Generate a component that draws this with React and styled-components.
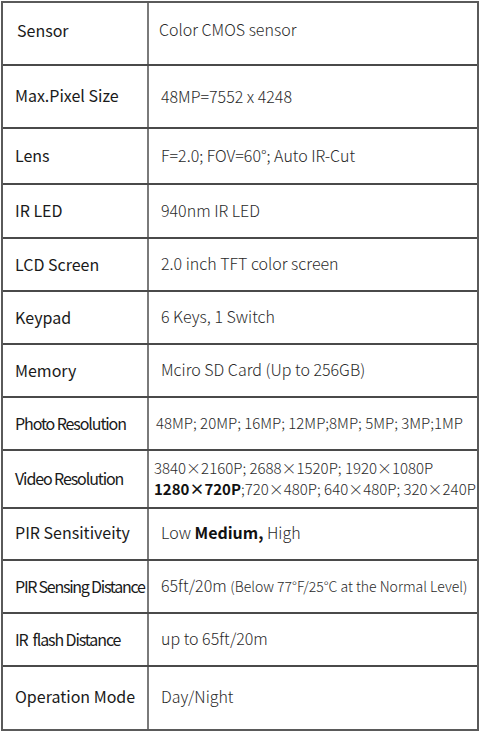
import React from 'react';
import styled, { createGlobalStyle } from 'styled-components';

const GlobalStyle = createGlobalStyle`
    html, body {
        margin: 0;
        padding: 0;
        background: #ffffff;
    }
    body {
        font-family: "Noto Sans CJK SC", "Noto Sans", sans-serif;
        color: #222;
    }
`

const Table = styled.div`
    margin: 1px 0 0 1px;
    width: 478px;
    box-sizing: border-box;
    border: 2px solid #5a5a5a;
`

const Row = styled.div`
    display: grid;
    grid-template-columns: 146px 1fr;
    height: ${p => p.h}px;
    box-sizing: border-box;
    padding-bottom: ${p => p.lift ?? 2}px;
    border-top: ${p => p.first ? 'none' : '2px solid #4a4a4a'};
`

const Label = styled.div`
    display: flex;
    align-items: center;
    padding-left: ${p => p.indent || 12}px;
    margin-bottom: -${p => p.lift ?? 2}px;
    padding-bottom: ${p => p.lift ?? 2}px;
    border-right: 2px solid #7a7a7a;
    font-size: 16px;
    font-weight: 400;
    color: #1a1a1a;
    letter-spacing: ${p => p.tight ? `${p.tight}px` : '0'};
    white-space: pre;
`

const Value = styled.div`
    display: flex;
    flex-direction: column;
    justify-content: center;
    padding-left: ${p => p.indent || 12}px;
    padding-top: ${p => p.shift || 0}px;
    font-size: ${p => p.size || 16}px;
    font-weight: 300;
    color: #2a2a2a;
    white-space: nowrap;
    line-height: 1.4;
`

const Strong = styled.b`
    font-weight: 700;
    color: #111;
`

const Note = styled.span`
    font-size: 14px;
`

const rows = [
    { label: 'Sensor', value: 'Color CMOS sensor', h: 61, li: 14, vi: 10, lift: 8 },
    { label: 'Max.Pixel Size', value: '48MP=7552 x 4248', h: 63, vi: 12, shift: 4, lift: 4 },
    { label: 'Lens', value: 'F=2.0; FOV=60°; Auto IR-Cut', h: 56 },
    { label: 'IR LED', value: '940nm IR LED', h: 54, vi: 12 },
    { label: 'LCD Screen', value: '2.0 inch TFT color screen', h: 53 },
    { label: 'Keypad', value: '6 Keys, 1 Switch', h: 53 },
    { label: 'Memory', value: 'Mciro SD Card (Up to 256GB)', h: 53 },
    { label: 'Photo Resolution', value: '48MP; 20MP; 16MP; 12MP;8MP; 5MP; 3MP;1MP', h: 53, tight: -1.1, vi: 7, size: 15 },
    {
        label: 'Video Resolution', h: 58, tight: -1.1, vi: 5, size: 15,
        value: (
            <>
                <span>3840×2160P; 2688×1520P; 1920×1080P</span>
                <span><Strong>1280×720P</Strong>;720×480P; 640×480P; 320×240P</span>
            </>
        )
    },
    {
        label: 'PIR Sensitiveity', h: 52, vi: 12, lift: 4,
        value: <span>Low <Strong>Medium,</Strong> High</span>
    },
    {
        label: 'PIR Sensing Distance', h: 53, tight: -1.25,
        value: <span>65ft/20m <Note>(Below 77°F/25°C at the Normal Level)</Note></span>
    },
    { label: 'IR  flash Distance', value: 'up to 65ft/20m', h: 53, tight: -1.1 },
    { label: 'Operation Mode', value: 'Day/Night', h: 64, lift: 4 },
]

export default function App() {
    return (
        <>
            <GlobalStyle />
            <Table>
                {rows.map((r, i) => (
                    <Row key={r.label} h={r.h} lift={r.lift} first={i === 0}>
                        <Label indent={r.li} tight={r.tight} lift={r.lift}>{r.label}</Label>
                        <Value indent={r.vi} size={r.size} shift={r.shift}>
                            {typeof r.value === 'string' ? <span>{r.value}</span> : r.value}
                        </Value>
                    </Row>
                ))}
            </Table>
        </>
    );
}
